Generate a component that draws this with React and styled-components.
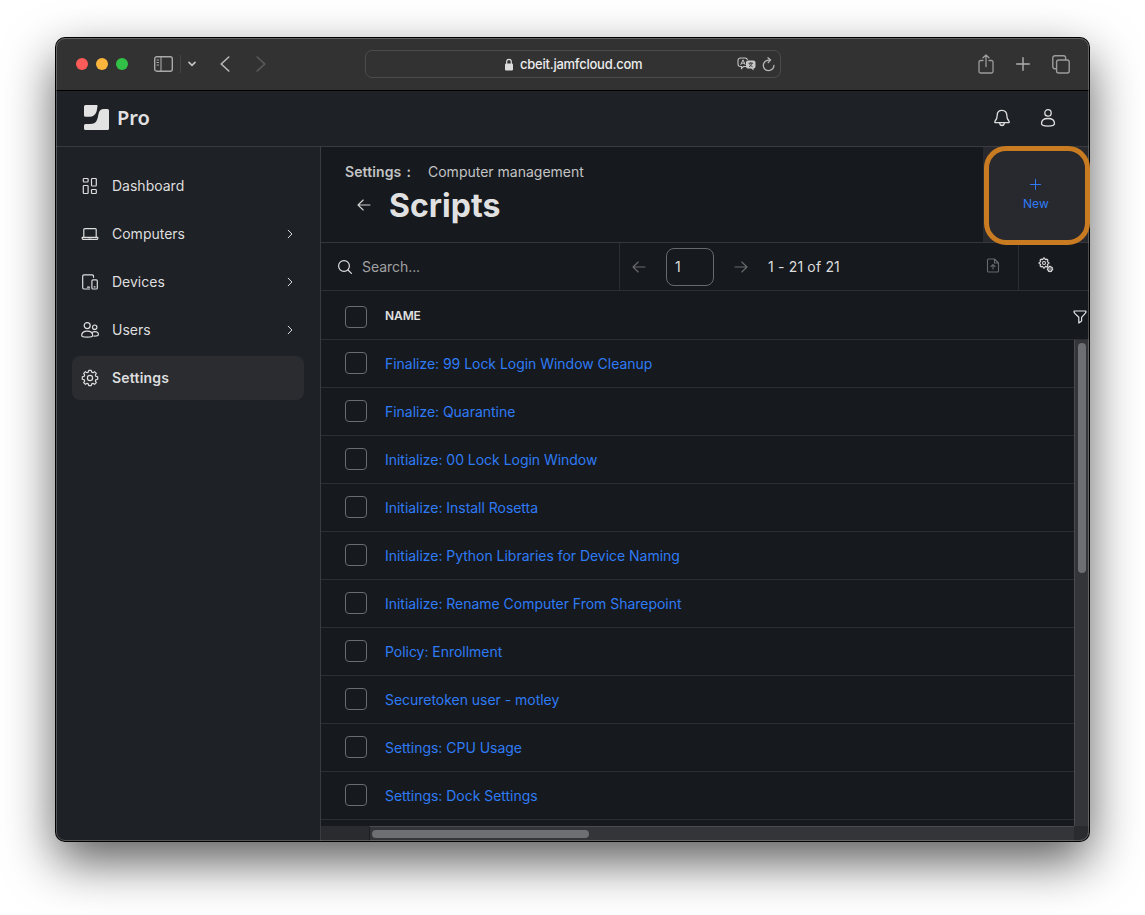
import React from 'react';
import styled, { createGlobalStyle } from 'styled-components';

const GlobalStyle = createGlobalStyle`
  * { box-sizing: border-box; }
  body {
    margin: 0;
    background: #fff;
    font-family: Inter, 'Liberation Sans', sans-serif;
    font-size: 14px;
    color: #dededf;
    overflow: hidden;
  }
`;

const Desktop = styled.div`
  width: 1145px;
  height: 915px;
  padding: 38px 0 0 56px;
`;

const Frame = styled.div`
  position: relative;
  width: 1033px;
  height: 803px;
`;

const Window = styled.div`
  display: flex;
  flex-direction: column;
  height: 100%;
  border-radius: 9px;
  overflow: hidden;
  background: #1e2125;
  box-shadow: 0 0 0 1px #000, 0 20px 50px rgba(0, 0, 0, 0.65);
`;

const WindowRim = styled.div`
  position: absolute;
  inset: 0;
  border: 1px solid rgba(255, 255, 255, 0.24);
  border-radius: 9px;
  pointer-events: none;
`;

const Highlight = styled.div`
  position: absolute;
  right: -1px;
  top: 108px;
  width: 106px;
  height: 99px;
  border: 5px solid #c97b22;
  border-radius: 22px;
  pointer-events: none;
`;

const BrowserBar = styled.div`
  display: flex;
  align-items: center;
  height: 53px;
  flex: none;
  padding: 0 18px 0 20px;
  background: #323232;
  border-bottom: 1px solid #000;
`;

const BarSide = styled.div`
  display: flex;
  align-items: center;
  width: ${(p) => p.$width}px;
`;

const TrafficLight = styled.span`
  width: 12px;
  height: 12px;
  border-radius: 50%;
  margin-right: 8px;
  background: ${(p) => p.$color};
`;

const BarIcon = styled.svg`
  display: block;
  flex: none;
  fill: none;
  stroke: ${(p) => p.$color || '#a9a9a9'};
  stroke-width: ${(p) => p.$stroke || 1.4};
  stroke-linecap: round;
  stroke-linejoin: round;
  margin-left: ${(p) => p.$gap || 0}px;
`;

const BarDivider = styled.span`
  width: 1px;
  height: 18px;
  margin-left: 7px;
  background: #444;
`;

const AddressBar = styled.div`
  display: flex;
  align-items: center;
  width: 416px;
  height: 28px;
  padding: 0 5px 0 138px;
  border: 1px solid #4c4c4c;
  border-radius: 7px;
`;

const Address = styled.span`
  flex: 1;
  margin-left: 6px;
  font-size: 13px;
  font-weight: 500;
  letter-spacing: -0.24px;
  color: #ececec;
`;

const AppHeader = styled.header`
  display: flex;
  align-items: center;
  height: 56px;
  flex: none;
  padding: 0 32px 2px 28px;
  border-bottom: 1px solid #393b3f;
`;

const ProductName = styled.span`
  flex: 1;
  margin: -1px 0 0 8px;
  font-family: 'Noto Sans', sans-serif;
  font-size: 20px;
  font-weight: 600;
  color: #e2e2e3;
`;

const Body = styled.div`
  display: flex;
  flex: 1;
  min-height: 0;
`;

const Sidebar = styled.nav`
  display: flex;
  flex-direction: column;
  gap: 4px;
  width: 265px;
  padding: 17px 16px;
  border-right: 1px solid #3a3c40;
`;

const NavItem = styled.a`
  display: flex;
  align-items: center;
  height: 44px;
  padding: 0 9px;
  border-radius: 8px;
  background: ${(p) => (p.$active ? '#2a2c30' : 'transparent')};
  font-weight: ${(p) => (p.$active ? 600 : 400)};
  letter-spacing: ${(p) => (p.$active ? 0.2 : 0)}px;
`;

const NavLabel = styled.span`
  flex: 1;
  margin: -2px 0 0 13px;
`;

const LineIcon = styled.svg`
  display: block;
  flex: none;
  fill: none;
  stroke: ${(p) => p.$color || '#dededf'};
  stroke-width: ${(p) => p.$stroke || 1.2};
  stroke-linecap: round;
  stroke-linejoin: round;
`;

const Main = styled.main`
  display: flex;
  flex-direction: column;
  flex: 1;
  min-width: 0;
  background: #16191d;
`;

const PageHeader = styled.div`
  display: flex;
  height: 96px;
  flex: none;
  border-bottom: 1px solid #35373b;
`;

const PageTitleBlock = styled.div`
  flex: 1;
  padding: 16px 0 0 24px;
`;

const Breadcrumb = styled.div`
  display: flex;
  height: 18px;
  line-height: 18px;
  letter-spacing: 0;
  color: #c3c4c5;
`;

const BreadcrumbRoot = styled.span`
  width: 83px;
  font-weight: 600;
  letter-spacing: 0.1px;
  word-spacing: 1.5px;
  white-space: pre;
`;

const TitleRow = styled.div`
  display: flex;
  align-items: center;
  height: 48px;
  padding-left: 12px;
`;

const Title = styled.h1`
  margin: 0 0 0 18px;
  font-size: 32px;
  font-weight: 700;
  color: #e1e1e2;
`;

const NewButton = styled.button`
  display: flex;
  flex-direction: column;
  align-items: center;
  gap: 6px;
  width: 106px;
  padding: 32px 0 0;
  border: 0;
  background: #28292e;
  color: #2f7bf5;
  font: 400 12px/16px Inter, sans-serif;
  letter-spacing: 0.2px;
`;

const Toolbar = styled.div`
  display: flex;
  height: 48px;
  flex: none;
  border-bottom: 1px solid #2c2e32;
`;

const SearchField = styled.label`
  display: flex;
  align-items: center;
  gap: 9px;
  width: 299px;
  padding-left: 16px;
  border-right: 1px solid #2c2e32;
  color: #a0a1a2;
  letter-spacing: -0.05px;
`;

const Pager = styled.div`
  display: flex;
  align-items: center;
  flex: 1;
  padding-left: 12px;
`;

const PageInput = styled.span`
  display: flex;
  align-items: center;
  width: 48px;
  height: 38px;
  margin: 0 20px;
  padding-left: 8px;
  border: 1px solid #68696b;
  border-radius: 8px;
`;

const PageRange = styled.span`
  flex: 1;
  margin-left: 20px;
  letter-spacing: 0.17px;
`;

const ToolbarButton = styled.button`
  display: flex;
  justify-content: center;
  width: ${(p) => p.$width}px;
  padding: ${(p) => p.$pad};
  border: 0;
  border-left: ${(p) => (p.$divided ? '1px solid #2c2e32' : '0')};
  background: none;
`;

const TableHeader = styled.div`
  display: flex;
  align-items: center;
  height: 49px;
  flex: none;
  padding: 3px 2px 0 24px;
  border-bottom: 1px solid #2c2e32;
`;

const ColumnName = styled.span`
  flex: 1;
  margin: -3px 0 0 18px;
  font-size: 12px;
  font-weight: 600;
  letter-spacing: -0.1px;
  color: #e1e1e2;
`;

const Checkbox = styled.span`
  width: 22px;
  height: 22px;
  flex: none;
  border: 1px solid #6b6c6e;
  border-radius: 4px;
`;

const TableBody = styled.div`
  display: flex;
  flex: 1;
  min-height: 0;
`;

const Rows = styled.div`
  flex: 1;
  overflow: hidden;
`;

const Row = styled.div`
  display: flex;
  align-items: center;
  height: 48px;
  padding: 0 24px 2px;
  border-bottom: 1px solid #2c2e32;
`;

const ScriptLink = styled.a`
  margin: 1px 0 0 18px;
  color: #2f7bf5;
  letter-spacing: -0.03px;
`;

const VerticalTrack = styled.div`
  width: 15px;
  padding: 3px 0 0 3px;
  border-left: 1px solid #4a4b4e;
  background: #343539;
`;

const VerticalThumb = styled.div`
  width: 8px;
  height: 230px;
  border-radius: 4px;
  background: #6e6f73;
`;

const ScrollFooter = styled.div`
  display: flex;
  height: 15px;
  flex: none;
`;

const FooterCap = styled.div`
  width: ${(p) => p.$width}px;
  background: #2a2b2f;
`;

const HorizontalTrack = styled.div`
  flex: 1;
  padding: 3px 0 0 2px;
  border-top: 1px solid #4a4b4e;
  border-left: 1px solid #1c1d20;
  background: #343539;
`;

const HorizontalThumb = styled.div`
  width: 217px;
  height: 8px;
  border-radius: 4px;
  background: #6e6f73;
`;

const HeaderIcons = styled.div`
  display: flex;
  align-items: center;
  gap: 28px;
`;

const gearPath = (cx, cy, outer, inner, teeth) => {
  const points = [];
  const step = (Math.PI * 2) / teeth;
  for (let i = 0; i < teeth; i += 1) {
    const a = i * step - Math.PI / 2;
    [[-0.36, inner], [-0.2, outer], [0.2, outer], [0.36, inner]].forEach(([o, r]) => {
      const t = a + o * step;
      points.push(`${(cx + r * Math.cos(t)).toFixed(2)} ${(cy + r * Math.sin(t)).toFixed(2)}`);
    });
  }
  return `M${points.join('L')}Z`;
};

const icons = {
  dashboard: (
    <>
      <rect x="2.3" y="1.500" width="4.800" height="3.500" rx="0.8" />
      <rect x="2.3" y="8.500" width="4.800" height="8" rx="0.8" />
      <rect x="10.5" y="1.500" width="4.800" height="7.500" rx="0.8" />
      <rect x="10.5" y="12.500" width="4.800" height="4" rx="0.8" />
    </>
  ),
  computers: (
    <>
      <path d="M2.8 12.2V4.6a1 1 0 0 1 1-1h10.4a1 1 0 0 1 1 1v7.6" />
      <path d="M1.2 12.4h15.6v.8a1.2 1.2 0 0 1-1.2 1.2H2.4a1.2 1.2 0 0 1-1.2-1.2zM7.5 12.6h3" />
    </>
  ),
  devices: (
    <>
      <path d="M8.6 16H2.9a1.2 1.2 0 0 1-1.2-1.2V3.1a1.2 1.2 0 0 1 1.2-1.2h8.4a1.2 1.2 0 0 1 1.2 1.2v1.2M6.500 14.200h2" />
      <rect x="10.9" y="6.9" width="5.4" height="9.1" rx="1.1" />
      <path d="M13.2 13.9h.8" />
    </>
  ),
  users: (
    <>
      <circle cx="6.2" cy="4.6" r="3" />
      <circle cx="13.7" cy="6.2" r="2.2" />
      <path d="M.7 14.6c0-2.6 2.3-4.4 5.5-4.4s5.5 1.8 5.5 4.4c0 1.2-1.6 1.6-5.5 1.6S.7 15.8.7 14.6z" />
      <path d="M11 11.4c.8-.5 1.7-.8 2.8-.8 2.3 0 3.6 1.3 3.6 3 0 1.2-1.4 1.6-4.4 1.6" />
    </>
  ),
  settings: (
    <>
      <path d={gearPath(9, 9, 7.8, 6.1, 8)} />
      <circle cx="9" cy="9" r="2.6" />
    </>
  ),
};

const navItems = [
  { id: 'dashboard', label: 'Dashboard' },
  { id: 'computers', label: 'Computers', expandable: true },
  { id: 'devices', label: 'Devices', expandable: true },
  { id: 'users', label: 'Users', expandable: true },
  { id: 'settings', label: 'Settings', active: true },
];

const scripts = [
  'Finalize: 99 Lock Login Window Cleanup',
  'Finalize: Quarantine',
  'Initialize: 00 Lock Login Window',
  'Initialize: Install Rosetta',
  'Initialize: Python Libraries for Device Naming',
  'Initialize: Rename Computer From Sharepoint',
  'Policy: Enrollment',
  'Securetoken user - motley',
  'Settings: CPU Usage',
  'Settings: Dock Settings',
];

const Arrow = ({ right, color }) => (
  <LineIcon width="14" height="14" viewBox="0 0 14 14" $color={color} $stroke={1.1}>
    <path d={right ? 'M1 7h12M7.8 2l5.2 5-5.2 5' : 'M13 7H1M6.2 2L1 7l5.2 5'} />
  </LineIcon>
);

function BrowserChrome() {
  return (
    <BrowserBar>
      <BarSide $width={289}>
        <TrafficLight $color="#fc5b57" />
        <TrafficLight $color="#fbb43c" />
        <TrafficLight $color="#32c146" />
        <BarIcon width="19" height="16" viewBox="0 0 19 16" $gap={18}>
          <rect x=".7" y=".8" width="17.6" height="14.4" rx="2" />
          <path d="M7 1v14M3 4h1.6M3 6.5h1.6M3 9h1.6" strokeWidth="1.1" />
        </BarIcon>
        <BarDivider />
        <BarIcon width="8" height="6" viewBox="0 0 8 6" $gap={7} $stroke={1.7} $color="#c0c0c0">
          <path d="M1 1.4l3 3 3-3" />
        </BarIcon>
        <BarIcon width="10" height="16" viewBox="0 0 10 16" $gap={24} $stroke={1.6} $color="#b8b8b8">
          <path d="M8.8 1L1.2 8l7.6 7" />
        </BarIcon>
        <BarIcon width="10" height="16" viewBox="0 0 10 16" $gap={26} $stroke={1.6} $color="#5c5c5c">
          <path d="M1.2 1l7.6 7-7.6 7" />
        </BarIcon>
      </BarSide>
      <AddressBar>
        <svg width="10" height="13" viewBox="0 0 10 13">
          <rect x="1" y="5.5" width="8" height="7" rx="1.2" fill="#dcdcdc" />
          <path d="M2.7 6V3.6a2.3 2.3 0 0 1 4.6 0V6" fill="none" stroke="#dcdcdc" strokeWidth="1.2" />
        </svg>
        <Address>cbeit.jamfcloud.com</Address>
        <svg width="20" height="14" viewBox="0 0 20 14">
          <path
            d="M9 9.5H6.5L4.5 11.5v-2H3.5A2.5 2.5 0 0 1 1 7V3.500A2.5 2.5 0 0 1 3.5 1H8a2.5 2.5 0 0 1 2.5 2"
            fill="none"
            stroke="#c4c4c4"
            strokeWidth="1.1"
          />
          <path d="M3.700 7.8L6 2.8l2.2 5M4.5 6.2h3" fill="none" stroke="#c4c4c4" strokeWidth="1" />
          <path d="M11 3.5h5.5a2 2 0 0 1 2 2v4a2 2 0 0 1-2 2V13.5L14.3 11.5H11a2 2 0 0 1-2-2v-4a2 2 0 0 1 2-2z" fill="#c8c8c8" />
          <path d="M11.500 6.200h4.600M13.800 5v1.200M12 9.700c1.500-.6 2.700-1.800 3-3.400M12.400 6.500c.4 1.400 1.600 2.600 3.200 3.200" fill="none" stroke="#323232" strokeWidth=".9" />
        </svg>
        <BarIcon width="13" height="15" viewBox="0 0 13 15" $gap={5} $stroke={1.3} $color="#b4b4b4">
          <path d="M11.9 8.3a5.3 5.3 0 1 1-5.4-5.2h1.8M6 .8l2.5 2.3L6.2 5.6" />
        </BarIcon>
      </AddressBar>
      <BarSide $width={290}>
        <BarIcon width="16" height="20" viewBox="0 0 16 20" $gap={197} $color="#9c9c9c" $stroke={1.3}>
          <path d="M5 6.500H2.500A1.500 1.500 0 0 0 1 8v9.500A1.500 1.500 0 0 0 2.500 19h11a1.500 1.500 0 0 0 1.500-1.500V8a1.500 1.500 0 0 0-1.500-1.500H11M8 12.500V1M5 3.800L8 1l3 2.800" />
        </BarIcon>
        <BarIcon width="14" height="14" viewBox="0 0 14 14" $gap={22} $color="#b0b0b0" $stroke={1.4}>
          <path d="M7 .7v12.6M.7 7h12.6" />
        </BarIcon>
        <BarIcon width="18" height="19" viewBox="0 0 18 19" $gap={22} $color="#9c9c9c" $stroke={1.4}>
          <rect x="4.6" y="5" width="12.6" height="13" rx="2" />
          <path d="M4.4 13.8H2.8a2 2 0 0 1-2-2V2.8a2 2 0 0 1 2-2h8.8a2 2 0 0 1 2 2v2" />
        </BarIcon>
      </BarSide>
    </BrowserBar>
  );
}

function ProductHeader() {
  return (
    <AppHeader>
      <svg width="25" height="25" viewBox="0 0 25 25" fill="#e2e2e3">
        <path d="M1.5 0H12.5a1 1 0 0 1 1 1.2C12.8 5 13 11.5 5.5 11.8H1.5A1.5 1.5 0 0 1 0 10.3V1.5A1.5 1.5 0 0 1 1.5 0z" />
        <path d="M25 5.5v18a1.5 1.5 0 0 1-1.5 1.5h-22A1.5 1.5 0 0 1 0 23.5v-3A1.5 1.5 0 0 1 1.5 19H6c7 0 7.5-5 8.5-10 .6-3.2 2.3-5 5.5-5h3.5A1.5 1.5 0 0 1 25 5.5z" />
      </svg>
      <ProductName>Pro</ProductName>
      <HeaderIcons>
        <LineIcon width="18" height="18" viewBox="0 0 18 18" $stroke={1.3}>
          <path d="M9 1.3c-3 0-4.800 2.200-4.800 4.900 0 3.300-.8 4.600-2.200 6.100-.5.6-.2 1.400.6 1.400h12.800c.8 0 1.100-.8.6-1.400-1.400-1.500-2.200-2.800-2.200-6.100 0-2.700-1.800-4.900-4.800-4.900z" />
          <path d="M6.700 14.200c.2 1.500 1.100 2.300 2.300 2.300s2.100-.8 2.300-2.300" />
        </LineIcon>
        <LineIcon width="18" height="18" viewBox="0 0 18 18" $stroke={1.3}>
          <circle cx="9" cy="3.9" r="3.2" />
          <path d="M2.500 14.500c0-3.200 2.700-5 6.500-5s6.500 1.800 6.500 5c0 1.800-1.900 2.600-6.500 2.600s-6.500-.8-6.500-2.600z" />
        </LineIcon>
      </HeaderIcons>
    </AppHeader>
  );
}

export default function App() {
  return (
    <>
      <GlobalStyle />
      <Desktop>
        <Frame>
          <Window>
            <BrowserChrome />
            <ProductHeader />
            <Body>
              <Sidebar>
                {navItems.map((item) => (
                  <NavItem key={item.id} $active={item.active}>
                    <LineIcon width="18" height="18" viewBox="0 0 18 18">
                      {icons[item.id]}
                    </LineIcon>
                    <NavLabel>{item.label}</NavLabel>
                    {item.expandable && (
                      <LineIcon width="10" height="10" viewBox="0 0 10 10" $stroke={1}>
                        <path d="M3.2 1.200L6.900 5 3.200 8.800" />
                      </LineIcon>
                    )}
                  </NavItem>
                ))}
              </Sidebar>
              <Main>
                <PageHeader>
                  <PageTitleBlock>
                    <Breadcrumb>
                      <BreadcrumbRoot>{'Settings :'}</BreadcrumbRoot>
                      <span>Computer management</span>
                    </Breadcrumb>
                    <TitleRow>
                      <Arrow color="#d0d0d1" />
                      <Title>Scripts</Title>
                    </TitleRow>
                  </PageTitleBlock>
                  <NewButton>
                    <LineIcon width="12" height="11" viewBox="0 0 12 11" $color="#2f7bf5" $stroke={1}>
                      <path d="M5.5 .5v10M.5 5.5h10" />
                    </LineIcon>
                    New
                  </NewButton>
                </PageHeader>
                <Toolbar>
                  <SearchField>
                    <LineIcon width="16" height="16" viewBox="0 0 16 16" $stroke={1.2}>
                      <circle cx="7" cy="7" r="5.4" />
                      <path d="M11 11l3.4 3.4" />
                    </LineIcon>
                    Search...
                  </SearchField>
                  <Pager>
                    <Arrow color="#6a6b6d" />
                    <PageInput>1</PageInput>
                    <Arrow right color="#6a6b6d" />
                    <PageRange>1 - 21 of 21</PageRange>
                  </Pager>
                  <ToolbarButton $width={50} $pad="15px 0 0">
                    <LineIcon width="14" height="15" viewBox="0 0 14 15" $color="#68696b" $stroke={1.1}>
                      <path d="M8.500 1H2.500a1 1 0 0 0-1 1v11a1 1 0 0 0 1 1h9a1 1 0 0 0 1-1V5zM8.500 1v4h4M7 11V6.800M5 8.500l2-1.900 2 1.900" />
                    </LineIcon>
                  </ToolbarButton>
                  <ToolbarButton $width={71} $pad="14px 16px 0 0" $divided>
                    <LineIcon width="16" height="16" viewBox="0 0 16 16" $stroke={1.1}>
                      <path d={gearPath(6, 6, 4.9, 3.8, 8)} />
                      <circle cx="6" cy="6" r="1.5" />
                      <path d={gearPath(12, 12, 2.7, 2, 7)} />
                      <circle cx="12" cy="12" r=".3" />
                    </LineIcon>
                  </ToolbarButton>
                </Toolbar>
                <TableHeader>
                  <Checkbox />
                  <ColumnName>NAME</ColumnName>
                  <LineIcon width="14" height="14" viewBox="0 0 14 14" $color="#e4e4e5">
                    <path d="M1 1h12c.2 1-.2 1.800-1 2.600L8.600 7.300v3.600L5.800 13V7.300L2 3.600C1.200 2.800.8 2 1 1z" />
                  </LineIcon>
                </TableHeader>
                <TableBody>
                  <Rows>
                    {scripts.map((name) => (
                      <Row key={name}>
                        <Checkbox />
                        <ScriptLink>{name}</ScriptLink>
                      </Row>
                    ))}
                  </Rows>
                  <VerticalTrack>
                    <VerticalThumb />
                  </VerticalTrack>
                </TableBody>
                <ScrollFooter>
                  <FooterCap $width={48} />
                  <HorizontalTrack>
                    <HorizontalThumb />
                  </HorizontalTrack>
                  <FooterCap $width={15} />
                </ScrollFooter>
              </Main>
            </Body>
          </Window>
          <WindowRim />
          <Highlight />
        </Frame>
      </Desktop>
    </>
  );
}
